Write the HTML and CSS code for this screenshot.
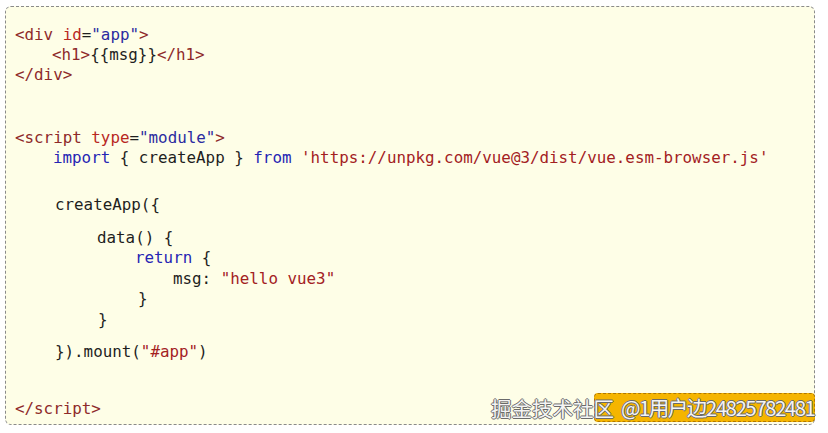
FILE: index.html
```html
<!DOCTYPE html>
<html>
<head>
<meta charset="utf-8">
<link rel="stylesheet" href="styles.css">
</head>
<body>
<div class="box">
  <div class="ln"><span class="tg">&lt;div</span> <span class="at">id</span>=<span class="sv">"app"</span><span class="tg">&gt;</span></div>
  <div class="ln i-h1"><span class="tg">&lt;h1&gt;</span>{{msg}}<span class="tg">&lt;/h1&gt;</span></div>
  <div class="ln"><span class="tg">&lt;/div&gt;</span></div>
  <div class="ln m-script"><span class="tg">&lt;script</span> <span class="at">type</span>=<span class="sv">"module"</span><span class="tg">&gt;</span></div>
  <div class="ln i-import"><span class="kw">import</span> { createApp } <span class="kw">from</span> <span class="st">'https://unpkg.com/vue@3/dist/vue.esm-browser.js'</span></div>
  <div class="ln i-create m-create">createApp({</div>
  <div class="ln i-data m-data">data() {</div>
  <div class="ln i-return"><span class="kw">return</span> {</div>
  <div class="ln i-msg m-1">msg: <span class="st">"hello vue3"</span></div>
  <div class="ln i-close1">}</div>
  <div class="ln i-close2 m-1">}</div>
  <div class="ln i-create m-mount">}).mount(<span class="st">"#app"</span>)</div>
  <div class="ln m-end"><span class="tg">&lt;/script&gt;</span></div>
  <div class="wm">
    <span class="wm-site">掘金技术社区</span>
    <span class="wm-tag">@1用户边24825782481</span>
  </div>
</div>
</body>
</html>
```
FILE: styles.css
```css
html, body {
  margin: 0;
  padding: 0;
  background: #ffffff;
}
body {
  width: 828px;
  height: 433px;
  overflow: hidden;
}
.box {
  position: relative;
  margin: 6px 0 0 5px;
  border: 1px dashed #8a8a8a;
  border-radius: 6px;
  background: #fefee7;
  padding: 18px 0 0 9px;
  box-sizing: border-box;
  height: 419px;
  width: 810px;
  font-family: "DejaVu Sans Mono", "Liberation Mono", monospace;
  font-size: 15.85px;
  color: #1e1e1e;
}
.ln {
  height: 20px;
  line-height: 20px;
  white-space: pre;
}
.tg { color: #8e2a2a; }
.at { color: #b8281f; }
.sv { color: #2b2ba0; }
.kw { color: #2525b4; }
.st { color: #a3211f; }

.i-h1 { padding-left: 37px; }
.i-import { padding-left: 38px; }
.i-create { padding-left: 40px; }
.i-data { padding-left: 82px; }
.i-return { padding-left: 120px; }
.i-msg { padding-left: 158px; }
.i-close1 { padding-left: 123px; }
.i-close2 { padding-left: 83px; }

.m-script { margin-top: 43px; }
.m-create { margin-top: 27px; }
.m-data { margin-top: 13px; }
.m-1 { margin-top: 1px; }
.m-mount { margin-top: 12px; }
.m-end { margin-top: 37px; }

.wm {
  position: absolute;
  left: 485px;
  top: 386px;
  display: flex;
  align-items: center;
  font-family: "Noto Sans CJK SC", "Noto Sans", sans-serif;
  font-size: 20.5px;
  line-height: 28px;
  color: #f4f4f4;
  text-shadow: -1px 0 #6a6a6a, 1px 0 #6a6a6a, 0 -1px #6a6a6a, 0 1px #6a6a6a;
}
.wm-site {
  position: relative;
  z-index: 1;
  white-space: nowrap;
}
.wm-tag {
  margin-left: -20px;
  width: 221px;
  height: 29px;
  padding-left: 26px;
  background: #f5b500;
  border: 1px dashed #b07800;
  border-radius: 4px;
  box-sizing: border-box;
  white-space: nowrap;
  letter-spacing: -1.5px;
  line-height: 27px;
}
```
